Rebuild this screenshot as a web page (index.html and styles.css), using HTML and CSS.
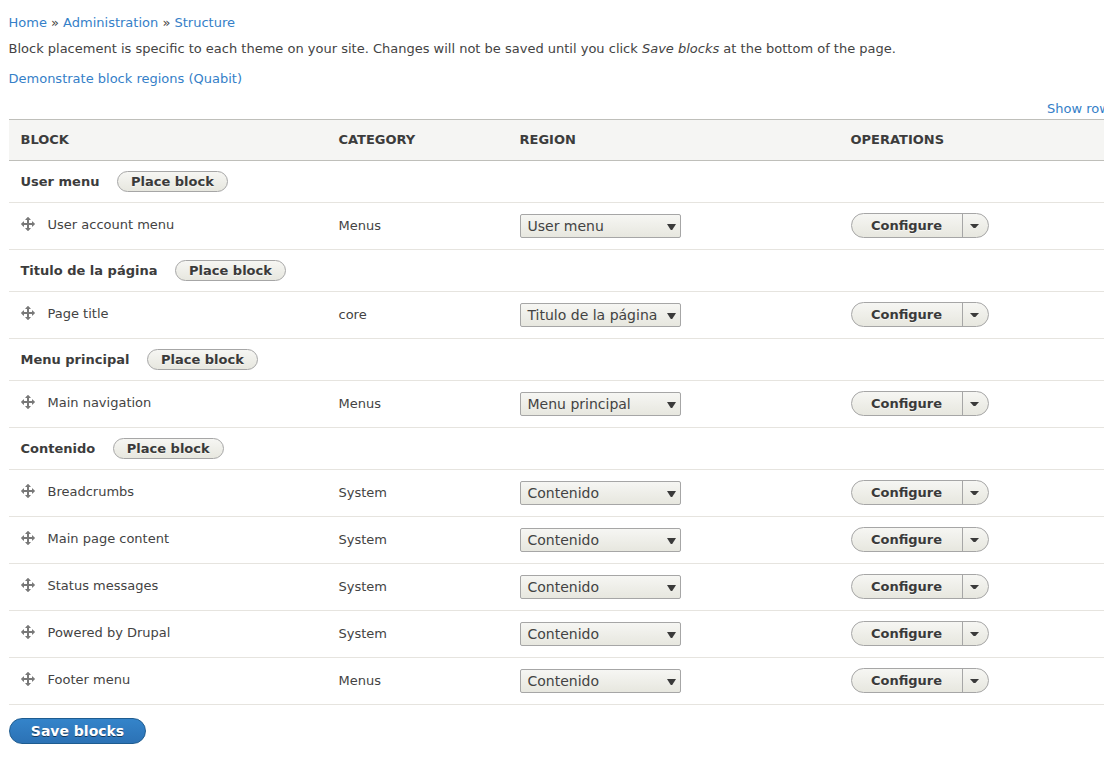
FILE: index.html
```html
<!DOCTYPE html>
<html lang="en">
<head>
<meta charset="utf-8">
<title>Block layout</title>
<link rel="stylesheet" href="styles.css">
</head>
<body>
<svg class="sprite" aria-hidden="true">
  <symbol id="move" viewBox="1 1 14 14"><path d="M14.904 7.753l-2.373-2.372c-.291-.292-.529-.193-.529.22v1.399h-3v-3h1.398c.413 0 .512-.239.22-.53l-2.371-2.372c-.137-.136-.36-.136-.497 0l-2.372 2.372c-.292.292-.193.53.22.53h1.4v3h-3v-1.369c0-.413-.239-.511-.53-.22l-2.372 2.372c-.136.136-.136.359 0 .494l2.372 2.372c.291.292.53.192.53-.219v-1.43h3v3h-1.4c-.413 0-.511.238-.22.529l2.374 2.373c.137.137.36.137.495 0l2.373-2.373c.29-.291.19-.529-.222-.529h-1.398v-3h3v1.4c0 .412.238.511.529.219l2.373-2.371c.137-.137.137-.359 0-.495z"/></symbol>
  <symbol id="arrow" viewBox="0 0 9 6"><path d="M0 0h9L5.2 6H3.8z"/></symbol>
</svg>
<main class="page">
  <nav class="breadcrumb"><a href="#">Home</a> » <a href="#">Administration</a> » <a href="#">Structure</a></nav>
  <p class="help">Block placement is specific to each theme on your site. Changes will not be saved until you click <em>Save blocks</em> at the bottom of the page.</p>
  <p class="demo"><a href="#">Demonstrate block regions (Quabit)</a></p>
  <div class="weights"><a href="#">Show row weights</a></div>
  <div class="table">
    <div class="head"><span>Block</span><span>Category</span><span>Region</span><span>Operations</span></div>

    <div class="region"><span>User menu</span><a class="place" href="#">Place block</a></div>
    <div class="row"><div class="block"><svg class="move"><use href="#move"/></svg>User account menu</div><div class="category">Menus</div><div><div class="select">User menu<svg class="arrow"><use href="#arrow"/></svg></div></div><div><div class="drop"><a href="#">Configure</a><span class="toggle"></span></div></div></div>

    <div class="region"><span>Titulo de la página</span><a class="place" href="#">Place block</a></div>
    <div class="row"><div class="block"><svg class="move"><use href="#move"/></svg>Page title</div><div class="category">core</div><div><div class="select">Titulo de la página<svg class="arrow"><use href="#arrow"/></svg></div></div><div><div class="drop"><a href="#">Configure</a><span class="toggle"></span></div></div></div>

    <div class="region"><span>Menu principal</span><a class="place" href="#">Place block</a></div>
    <div class="row"><div class="block"><svg class="move"><use href="#move"/></svg>Main navigation</div><div class="category">Menus</div><div><div class="select">Menu principal<svg class="arrow"><use href="#arrow"/></svg></div></div><div><div class="drop"><a href="#">Configure</a><span class="toggle"></span></div></div></div>

    <div class="region"><span>Contenido</span><a class="place" href="#">Place block</a></div>
    <div class="row"><div class="block"><svg class="move"><use href="#move"/></svg>Breadcrumbs</div><div class="category">System</div><div><div class="select">Contenido<svg class="arrow"><use href="#arrow"/></svg></div></div><div><div class="drop"><a href="#">Configure</a><span class="toggle"></span></div></div></div>
    <div class="row"><div class="block"><svg class="move"><use href="#move"/></svg>Main page content</div><div class="category">System</div><div><div class="select">Contenido<svg class="arrow"><use href="#arrow"/></svg></div></div><div><div class="drop"><a href="#">Configure</a><span class="toggle"></span></div></div></div>
    <div class="row"><div class="block"><svg class="move"><use href="#move"/></svg>Status messages</div><div class="category">System</div><div><div class="select">Contenido<svg class="arrow"><use href="#arrow"/></svg></div></div><div><div class="drop"><a href="#">Configure</a><span class="toggle"></span></div></div></div>
    <div class="row"><div class="block"><svg class="move"><use href="#move"/></svg>Powered by Drupal</div><div class="category">System</div><div><div class="select">Contenido<svg class="arrow"><use href="#arrow"/></svg></div></div><div><div class="drop"><a href="#">Configure</a><span class="toggle"></span></div></div></div>
    <div class="row"><div class="block"><svg class="move"><use href="#move"/></svg>Footer menu</div><div class="category">Menus</div><div><div class="select">Contenido<svg class="arrow"><use href="#arrow"/></svg></div></div><div><div class="drop"><a href="#">Configure</a><span class="toggle"></span></div></div></div>
  </div>
  <button class="save" type="button">Save blocks</button>
</main>
</body>
</html>
```
FILE: styles.css
```css
* { box-sizing: border-box; }
body {
  margin: 0;
  background: #fff;
  color: #434343;
  font: 13px/20px "DejaVu Sans", sans-serif;
  overflow: hidden;
}
a { color: #3580c8; text-decoration: none; }
.sprite { display: none; }
.page { padding: 13px 0 0 8.5px; overflow: hidden; height: 763px; }
.help { margin: 6px 0 10px; white-space: nowrap; }
.demo { margin: 0; }
.weights { margin: 10px 0 0 1038.5px; white-space: nowrap; }
.head, .row {
  display: grid;
  grid-template-columns: 318px 181px 331px 1fr;
  padding-left: 12px;
}
.head {
  height: 42px;
  align-items: center;
  background: #f5f5f3;
  border-top: 1px solid #bfbfba;
  border-bottom: 1px solid #bfbfba;
  font-weight: bold;
  text-transform: uppercase;
}
.region {
  display: flex;
  align-items: center;
  gap: 17.5px;
  height: 42px;
  padding-left: 12px;
  border-bottom: 1px solid #e6e4df;
  font-weight: bold;
}
.head, .region { color: #3c3c3c; }
.place {
  width: 111px;
  height: 21px;
  border: 1px solid #a6a6a6;
  border-radius: 11px;
  background: linear-gradient(#f6f6f3, #e7e7df);
  color: #3a3a3a;
  line-height: 19px;
  text-align: center;
  text-shadow: 0 1px #fff9;
}
.row { height: 47px; padding-top: 10px; border-bottom: 1px solid #e6e4df; }
.block { display: flex; align-items: flex-start; gap: 12.5px; padding-top: 2px; }
.move { flex: none; width: 14px; height: 14px; margin: 2px 0 0 .5px; fill: #787878; }
.category { padding-top: 3px; }
.select {
  display: flex;
  align-items: center;
  justify-content: space-between;
  width: 161px;
  height: 24px;
  margin-top: 1px;
  padding: 0 3.5px 0 7px;
  border: 1px solid #a6a6a6;
  border-radius: 2px;
  background: linear-gradient(#f6f6f3, #e7e7df);
  font-size: 14px;
  line-height: 22px;
}
.arrow { width: 9px; height: 6px; margin-top: 2px; fill: #3a3a3a; }
.drop {
  display: flex;
  width: 138px;
  height: 25px;
  border: 1px solid #a6a6a6;
  border-radius: 13px;
  background: linear-gradient(#f6f6f3, #e7e7df);
}
.drop a {
  width: 110px;
  color: #3a3a3a;
  font-weight: bold;
  line-height: 23px;
  text-align: center;
  text-shadow: 0 1px #fff9;
}
.toggle {
  display: flex;
  flex: 1;
  align-items: center;
  padding-left: 7.5px;
  border-left: 1px solid #a6a6a6;
}
.toggle::before {
  content: "";
  width: 9px;
  height: 4px;
  background: #3a3a3a;
  clip-path: polygon(0 0, 100% 0, 60% 100%, 40% 100%);
  margin-top: 1px;
}
.save {
  display: block;
  width: 137px;
  height: 26px;
  margin: 13px 0 0;
  padding: 0 0 0 1px;
  border: 1px solid #1e5c90;
  border-radius: 13px;
  background: linear-gradient(#3484ca, #2c72b5);
  color: #fff;
  font: bold 14px/24px "DejaVu Sans", sans-serif;
  text-shadow: 0 1px #0008;
}
```
